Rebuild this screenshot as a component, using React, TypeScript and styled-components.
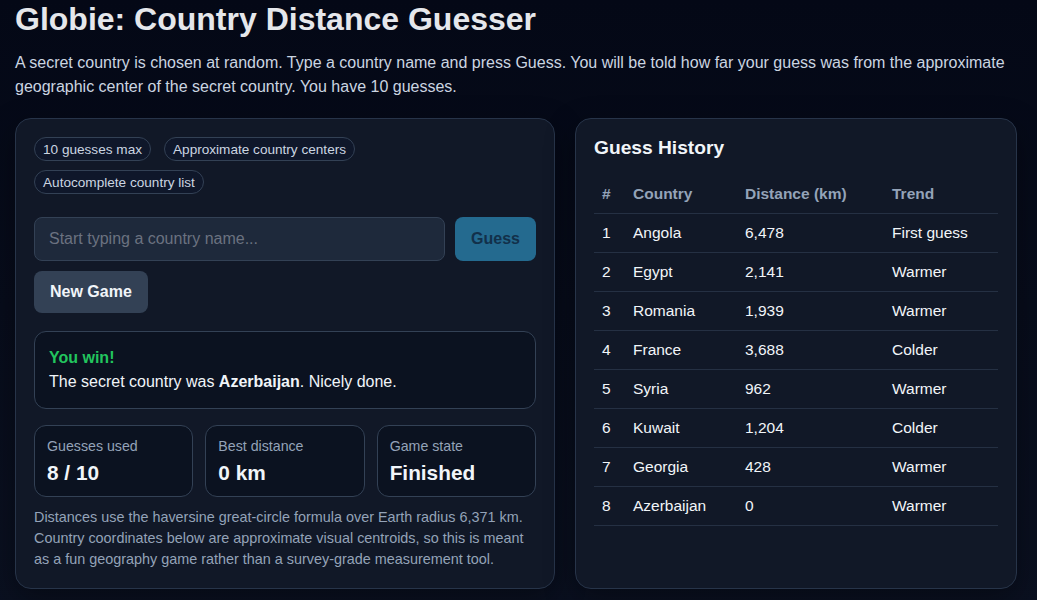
import React from "react";
import styled, { createGlobalStyle } from "styled-components";

const Global = createGlobalStyle`
  html, body { margin: 0; padding: 0; }
  body {
    background: linear-gradient(180deg, #040816 0%, #0a1020 100%);
    min-height: 100vh;
    font-family: "Liberation Sans", Arial, sans-serif;
    color: #e5e7eb;
  }
  * { box-sizing: border-box; }
`;

const Page = styled.div`
  padding: 0 20px 24px 15px;
`;

const Title = styled.h1`
  margin: 0;
  font-size: 32px;
  line-height: 38px;
  font-weight: 700;
  color: #e5e7eb;
`;

const Intro = styled.p`
  margin: 13px 0 19px;
  font-size: 16px;
  line-height: 24px;
  color: #cbd5e1;
`;

const Layout = styled.div`
  display: grid;
  grid-template-columns: 540px 1fr;
  gap: 20px;
  align-items: stretch;
`;

const Card = styled.section`
  background: #111827;
  border: 1px solid #273449;
  border-radius: 16px;
  padding: 18px;
  box-shadow: 0 10px 30px rgba(0, 0, 0, 0.35);
`;

const Chips = styled.div`
  display: flex;
  flex-wrap: wrap;
  gap: 9px 13px;
  margin-bottom: 23px;
`;

const Chip = styled.span`
  display: inline-flex;
  align-items: center;
  height: 24px;
  padding: 0 8px;
  border: 1px solid #334155;
  border-radius: 999px;
  background: #0f172a;
  color: #cbd5e1;
  font-size: 13.6px;
`;

const InputRow = styled.div`
  display: flex;
  gap: 10px;
`;

const TextInput = styled.input`
  flex: 1;
  height: 44px;
  padding: 0 14px;
  border: 1px solid #334155;
  border-radius: 8px;
  background: #1e293b;
  color: #e5e7eb;
  font: 16px "Liberation Sans", Arial, sans-serif;
  outline: none;
  &::placeholder { color: #6b7280; }
`;

const Button = styled.button<{ $variant: "primary" | "secondary" }>`
  height: ${(p) => (p.$variant === "primary" ? "44px" : "42px")};
  padding: 0 16px;
  border: none;
  border-radius: 8px;
  font: 700 16px "Liberation Sans", Arial, sans-serif;
  cursor: pointer;
  background: ${(p) => (p.$variant === "primary" ? "#246a8f" : "#334155")};
  color: ${(p) => (p.$variant === "primary" ? "#12304a" : "#f1f5f9")};
`;

const ButtonRow = styled.div`
  margin-top: 10px;
`;

const Result = styled.div`
  margin-top: 18px;
  padding: 14px;
  border: 1px solid #334155;
  border-radius: 12px;
  background: #0b1220;
  font-size: 16px;
  line-height: 24px;
  color: #f1f5f9;
`;

const WinTitle = styled.div`
  color: #22c55e;
  font-weight: 700;
`;

const Stats = styled.div`
  display: grid;
  grid-template-columns: repeat(3, 1fr);
  gap: 12px;
  margin-top: 16px;
`;

const Stat = styled.div`
  padding: 10px 12px;
  border: 1px solid #334155;
  border-radius: 12px;
  background: #0b1220;
`;

const StatLabel = styled.div`
  font-size: 14.2px;
  line-height: 20px;
  color: #94a3b8;
`;

const StatValue = styled.div`
  margin-top: 4px;
  font-size: 20.8px;
  line-height: 26px;
  font-weight: 700;
  color: #f1f5f9;
`;

const Note = styled.p`
  margin: 10px 0 0;
  font-size: 14.4px;
  line-height: 21px;
  color: #94a3b8;
`;

const HistoryTitle = styled.h2`
  margin: 1px 0 17px;
  font-size: 19.2px;
  line-height: 20px;
  font-weight: 700;
  color: #f1f5f9;
`;

const Table = styled.table`
  width: 100%;
  border-collapse: collapse;
  table-layout: fixed;
  font-size: 15.5px;
`;

const Th = styled.th<{ $w?: number }>`
  width: ${(p) => (p.$w ? `${p.$w}px` : "auto")};
  text-align: left;
  padding: 10px 8px;
  line-height: 18px;
  font-weight: 700;
  color: #94a3b8;
  border-bottom: 1px solid #253043;
`;

const Td = styled.td`
  padding: 10px 8px;
  line-height: 18px;
  color: #f1f5f9;
  border-bottom: 1px solid #253043;
`;

const history = [
  ["1", "Angola", "6,478", "First guess"],
  ["2", "Egypt", "2,141", "Warmer"],
  ["3", "Romania", "1,939", "Warmer"],
  ["4", "France", "3,688", "Colder"],
  ["5", "Syria", "962", "Warmer"],
  ["6", "Kuwait", "1,204", "Colder"],
  ["7", "Georgia", "428", "Warmer"],
  ["8", "Azerbaijan", "0", "Warmer"],
];

export default function App() {
  return (
    <Page>
      <Global />
      <Title>Globie: Country Distance Guesser</Title>
      <Intro>
        A secret country is chosen at random. Type a country name and press Guess. You will be told how far your
        guess was from the approximate geographic center of the secret country. You have 10 guesses.
      </Intro>
      <Layout>
        <Card>
          <Chips>
            <Chip>10 guesses max</Chip>
            <Chip>Approximate country centers</Chip>
            <Chip>Autocomplete country list</Chip>
          </Chips>
          <InputRow>
            <TextInput placeholder="Start typing a country name..." />
            <Button $variant="primary">Guess</Button>
          </InputRow>
          <ButtonRow>
            <Button $variant="secondary">New Game</Button>
          </ButtonRow>
          <Result>
            <WinTitle>You win!</WinTitle>
            <div>
              The secret country was <strong>Azerbaijan</strong>. Nicely done.
            </div>
          </Result>
          <Stats>
            <Stat>
              <StatLabel>Guesses used</StatLabel>
              <StatValue>8 / 10</StatValue>
            </Stat>
            <Stat>
              <StatLabel>Best distance</StatLabel>
              <StatValue>0 km</StatValue>
            </Stat>
            <Stat>
              <StatLabel>Game state</StatLabel>
              <StatValue>Finished</StatValue>
            </Stat>
          </Stats>
          <Note>
            Distances use the haversine great-circle formula over Earth radius 6,371 km. Country coordinates below
            are approximate visual centroids, so this is meant as a fun geography game rather than a survey-grade
            measurement tool.
          </Note>
        </Card>
        <Card>
          <HistoryTitle>Guess History</HistoryTitle>
          <Table>
            <thead>
              <tr>
                <Th $w={31}>#</Th>
                <Th $w={112}>Country</Th>
                <Th $w={147}>Distance (km)</Th>
                <Th>Trend</Th>
              </tr>
            </thead>
            <tbody>
              {history.map((r) => (
                <tr key={r[0]}>
                  {r.map((c, i) => (
                    <Td key={i}>{c}</Td>
                  ))}
                </tr>
              ))}
            </tbody>
          </Table>
        </Card>
      </Layout>
    </Page>
  );
}
